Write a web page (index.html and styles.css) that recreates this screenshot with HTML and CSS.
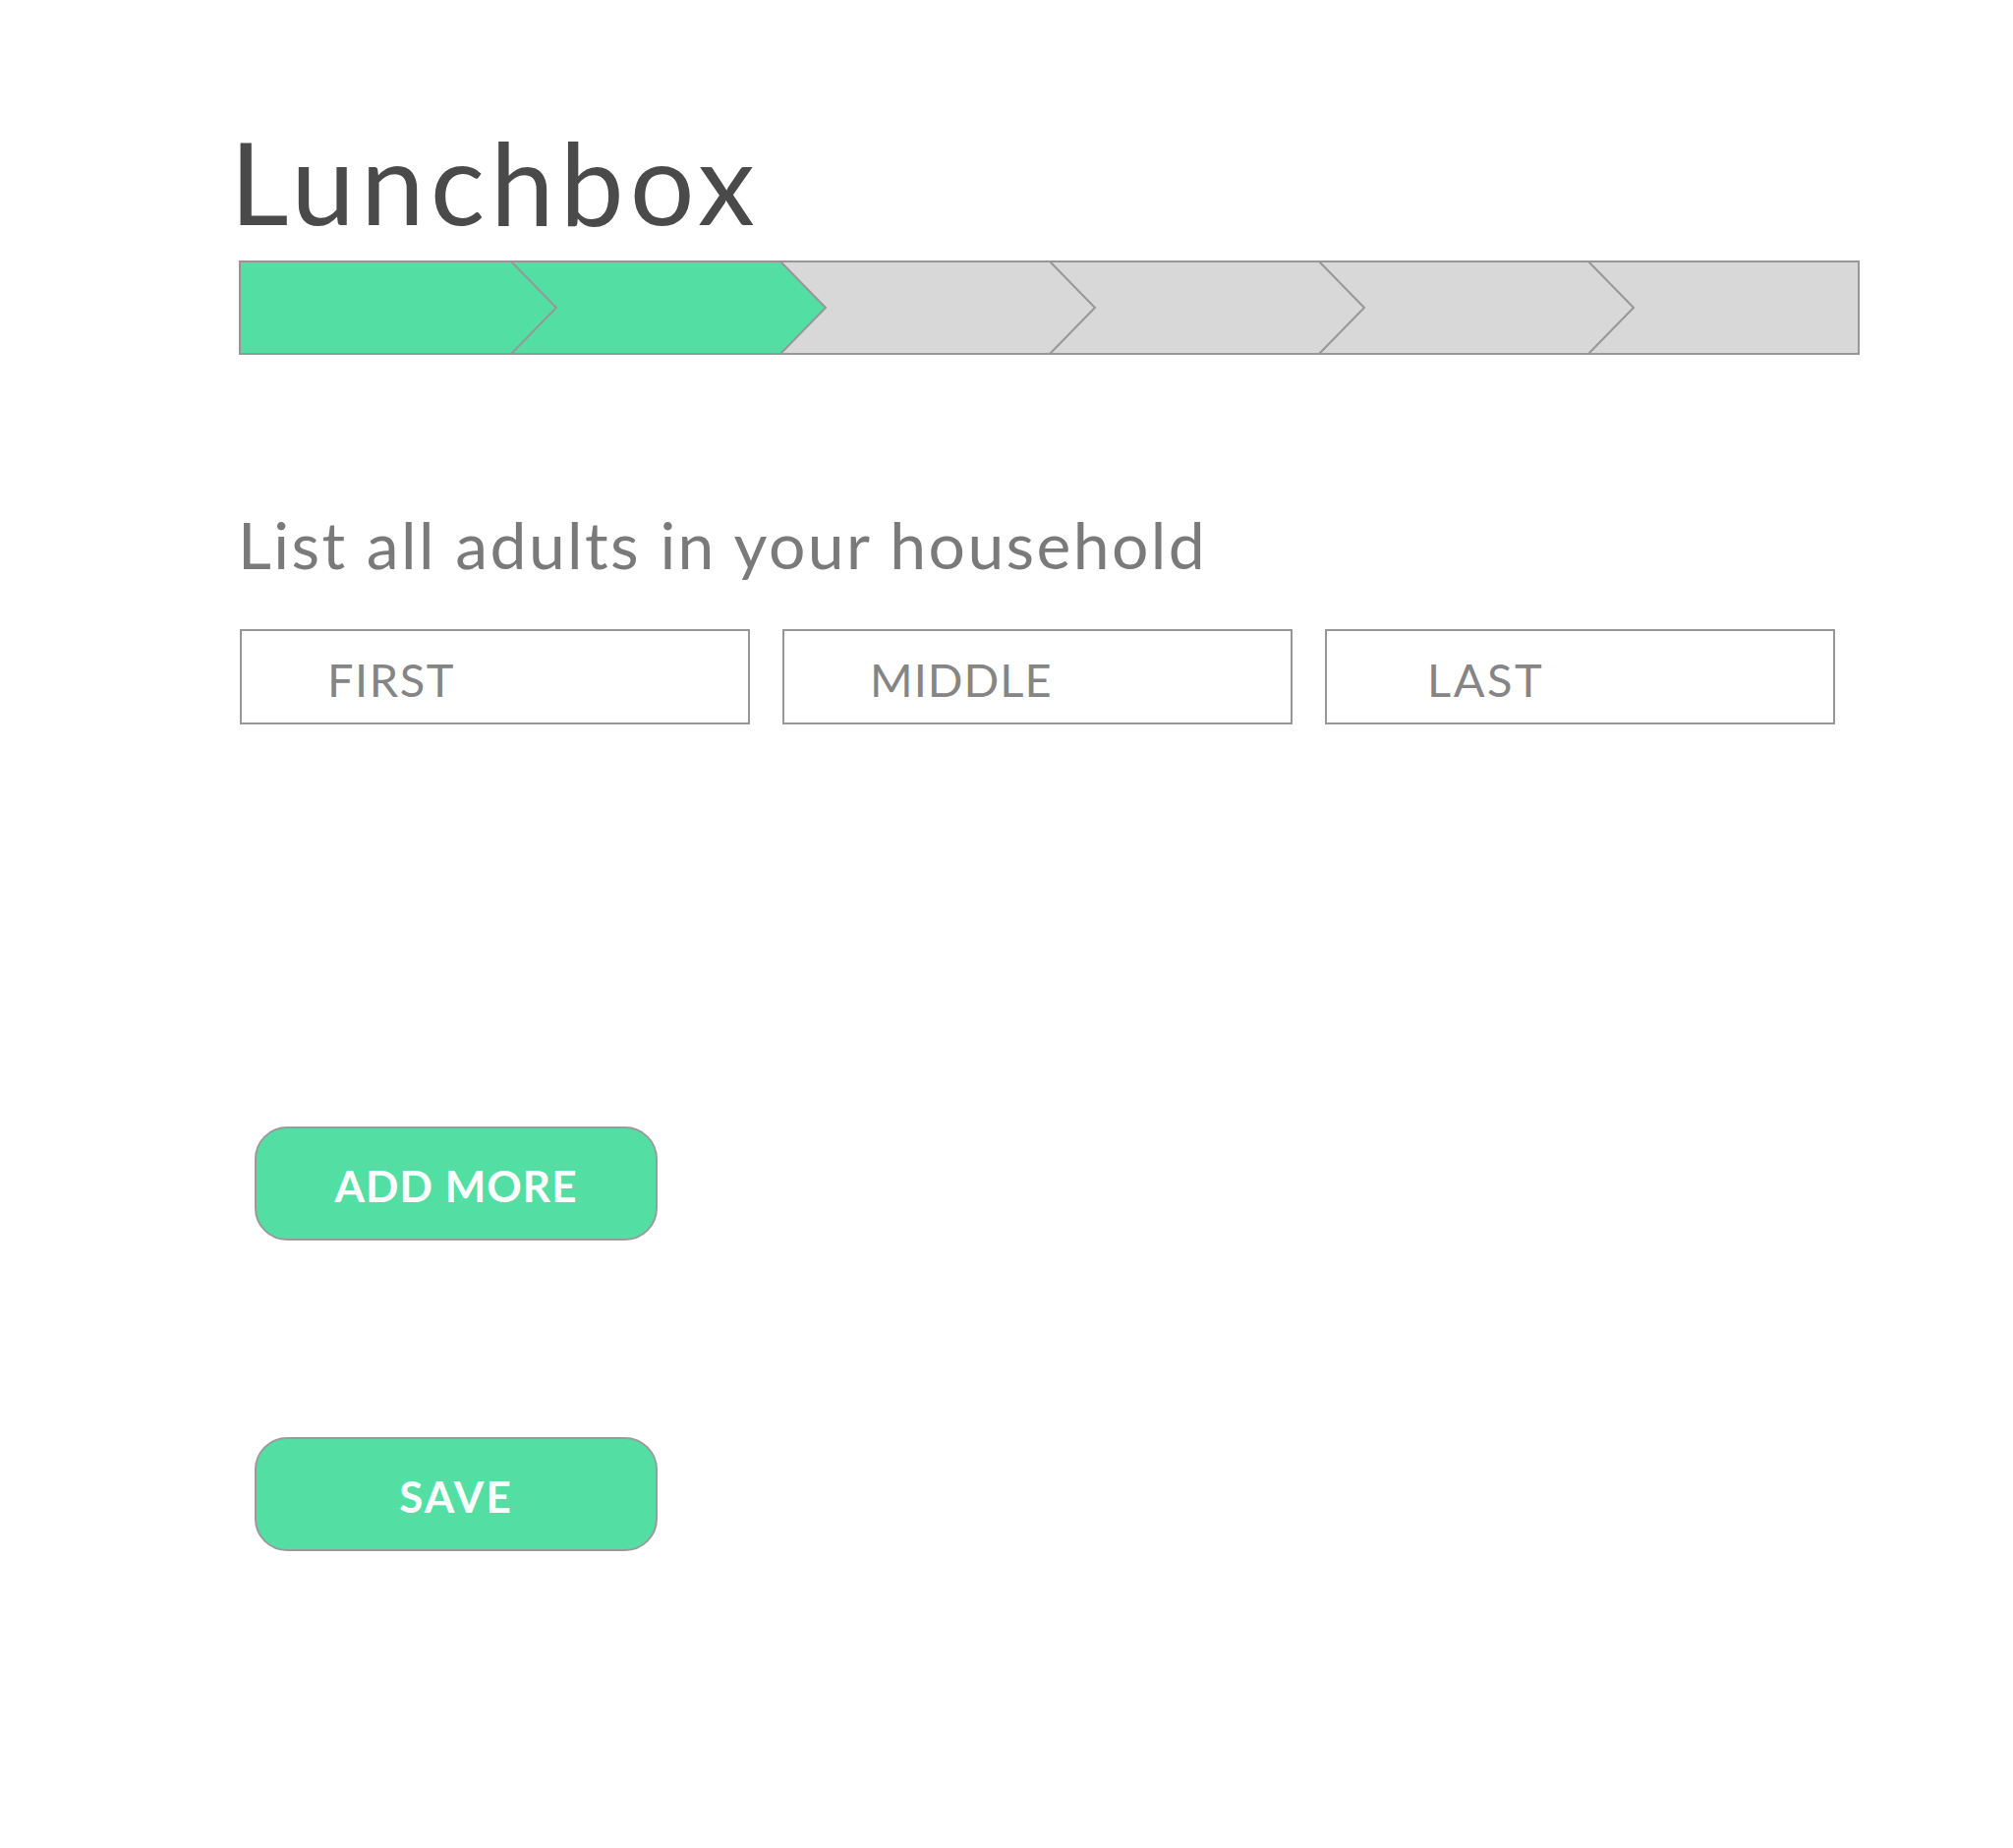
FILE: index.html
```html
<!DOCTYPE html>
<html lang="en">
<head>
<meta charset="utf-8">
<title>Lunchbox</title>
<link rel="stylesheet" href="styles.css">
</head>
<body>
<main class="page">
  <h1 class="title">Lunchbox</h1>
  <div class="progress" aria-label="Step 2 of 6">
    <svg class="progress-svg" width="1649" height="96" viewBox="-1 -1 1649 96">
      <rect x="0" y="0" width="1647" height="94" fill="#d8d8d8"/>
      <polygon points="0,0 550,0 596,47 550,94 0,94" fill="#53dfa4"/>
      <g fill="none" stroke="#979797" stroke-width="2">
        <polyline points="276,0 322,47 276,94"/>
        <polyline points="550,0 596,47 550,94"/>
        <polyline points="824,0 870,47 824,94"/>
        <polyline points="1098,0 1144,47 1098,94"/>
        <polyline points="1372,0 1418,47 1372,94"/>
        <rect x="0" y="0" width="1647" height="94"/>
      </g>
    </svg>
  </div>

  <h2 class="subtitle">List all adults in your household</h2>

  <div class="name-row">
    <div class="field"><span class="placeholder">FIRST</span></div>
    <div class="field field-middle"><span class="placeholder">MIDDLE</span></div>
    <div class="field field-last"><span class="placeholder">LAST</span></div>
  </div>

  <button class="btn btn-add" type="button">ADD MORE</button>
  <button class="btn btn-save" type="button">SAVE</button>
</main>
</body>
</html>
```

FILE: styles.css
```css
* {
  box-sizing: border-box;
}

html, body {
  margin: 0;
  padding: 0;
  background: #ffffff;
}

body {
  font-family: Lato, "Open Sans", "Liberation Sans", sans-serif;
  width: 2048px;
  min-height: 1880px;
}

.page {
  display: flex;
  flex-direction: column;
  align-items: flex-start;
  padding: 127px 0 0 244px;
}

.title {
  margin: 0 0 0 -10px;
  font-size: 116px;
  line-height: 1;
  font-weight: 400;
  letter-spacing: 6px;
  color: #4a4a4a;
}

.progress {
  margin-top: 22px;
  margin-left: -1px;
  line-height: 0;
}

.progress-svg {
  display: block;
}

.subtitle {
  margin: 160px 0 0 -2px;
  font-size: 66px;
  line-height: 1;
  font-weight: 400;
  letter-spacing: 2.4px;
  color: #7a7a7a;
}

.name-row {
  display: flex;
  gap: 33px;
  margin-top: 53px;
}

.field {
  width: 519px;
  height: 97px;
  border: 2px solid #979797;
  display: flex;
  align-items: center;
  padding: 6px 0 0 87px;
}

.field-middle .placeholder {
  letter-spacing: 1px;
}

.field-last {
  padding-left: 102px;
}

.field-last .placeholder {
  letter-spacing: 2.5px;
}

.placeholder {
  font-size: 47px;
  line-height: 1;
  letter-spacing: 1.5px;
  color: #858585;
}

.btn {
  width: 410px;
  height: 116px;
  margin-left: 15px;
  border: 2px solid #9b9b9b;
  border-radius: 33px;
  background: #53dfa4;
  color: #ffffff;
  font-family: Lato, "Open Sans", "Liberation Sans", sans-serif;
  font-weight: 700;
  font-size: 44px;
  line-height: 1;
  letter-spacing: 1px;
  padding: 4px 0 0;
  cursor: pointer;
}

.btn-save {
  letter-spacing: 2px;
}

.btn-add {
  margin-top: 409px;
}

.btn-save {
  margin-top: 200px;
}
```
